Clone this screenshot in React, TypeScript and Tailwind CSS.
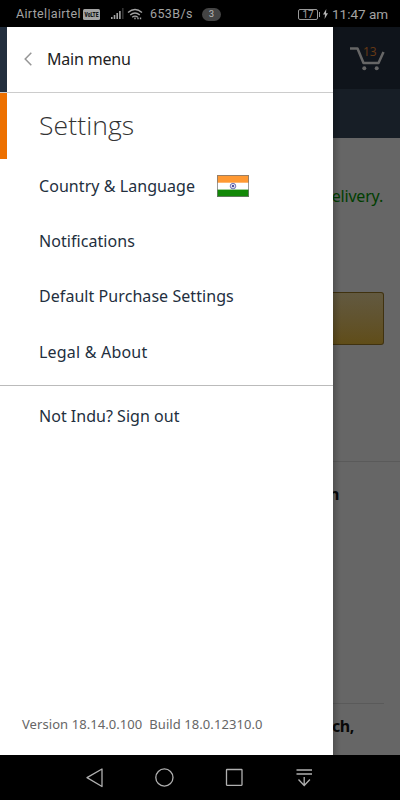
import React from "react";

const ember = "font-['Noto_Sans','Open_Sans',sans-serif]";

function StatusBar() {
  return (
    <header className="flex h-[27px] shrink-0 items-center bg-black pl-4 pr-3 pt-px font-['Roboto',sans-serif] text-[12.5px] leading-none text-[#a3a3a3]">
      <span className="w-[67px] whitespace-nowrap leading-4 tracking-[0.32px]">Airtel|airtel</span>
      <svg className="h-[11px] w-[17px] shrink-0 overflow-visible" viewBox="0 0 17 11">
        <rect width="17" height="11" rx="1.5" fill="#a3a3a3" />
        <text x="1.5" y="8" textLength="14" lengthAdjust="spacingAndGlyphs" fontSize="7" fontWeight="900" fontFamily="Roboto, sans-serif" fill="#111">VoLTE</text>
      </svg>
      <svg className="ml-[11px] h-3 w-[13px] shrink-0" viewBox="0 0 13 12" fill="#a3a3a3">
        <rect x="0" y="9" width="1.6" height="2" />
        <rect x="2.7" y="7" width="1.6" height="4" />
        <rect x="5.4" y="5" width="1.6" height="6" />
        <rect x="8.1" y="3" width="1.6" height="8" />
        <rect x="11" y="0" width="1.6" height="11" fill="#333" />
      </svg>
      <svg className="ml-[3px] h-[13px] w-4 shrink-0" viewBox="0 0 16 13" fill="none" stroke="#a3a3a3" strokeWidth="1.4">
        <path d="M1 4.5Q8-1.5 15 4.5M3.2 7Q8 2.8 12.8 7M5.2 9.3Q8 7 10.8 9.3" />
        <path d="M8 9.5v2.5M11 9.5v2.5M13.5 9.5v2.5" strokeDasharray="1.5 .8" />
      </svg>
      <span className="ml-[7px] w-[43px] whitespace-nowrap leading-4 tracking-[0.4px]">653B/s</span>
      <span className="ml-[9px] flex h-[13px] w-[19px] items-center justify-center rounded-full bg-[#444] text-[9.5px] text-[#bbb]">3</span>
      <span className="ml-auto flex h-[11px] w-[20px] items-center justify-center rounded-[2px] border border-[#999] text-[10px] leading-[9px]">17</span>
      <span className="ml-px h-[5px] w-px bg-[#999]" />
      <svg className="ml-[3px] h-[10px] w-[5px]" viewBox="0 0 5 10" fill="#b5b5b5">
        <path d="M3.3 0 0 5.6h2L1.6 10 5 4.2H3z" />
      </svg>
      <span className="ml-[4px] w-[56px] whitespace-nowrap text-[13.5px] leading-4">11:47 am</span>
    </header>
  );
}

function IndiaFlag() {
  return (
    <svg className="ml-[22px] h-[22px] w-8" viewBox="0 0 32 22">
      <rect width="32" height="22" fill="#fff" />
      <rect width="32" height="7.7" fill="#ff9933" />
      <rect y="14.6" width="32" height="7.4" fill="#128807" />
      <g stroke="#5558a8" fill="none">
        <circle cx="16" cy="11.1" r="2.8" strokeWidth=".8" />
        <path d="M13.2 11.1h5.6M16 8.3v5.6M14 9.1l4 4M18 9.1l-4 4" strokeWidth=".35" />
      </g>
      <circle cx="16" cy="11.1" r="1" fill="#37398e" />
      <rect x=".5" y=".5" width="31" height="21" fill="none" stroke="#777" strokeOpacity=".75" />
    </svg>
  );
}

function Drawer() {
  return (
    <aside className={`flex w-[333px] shrink-0 flex-col bg-white text-[#232f3e] ${ember}`}>
      <div className="flex h-[66px] shrink-0 border-b border-[#ccc] text-[#222]">
        <span className="w-[7px] bg-[#232f3e]" />
        <button className="flex items-center pb-0.5 pl-[17px] text-left">
          <svg className="h-[14px] w-2" viewBox="0 0 8 14" fill="none" stroke="#969696" strokeWidth="1.5">
            <path d="M7.3.7 1.2 7l6.1 6.3" />
          </svg>
          <span className="ml-[15px] text-[16px] tracking-[-0.2px]">Main menu</span>
        </button>
      </div>
      <h1 className="flex h-[66px] shrink-0 items-center border-l-[7px] border-[#ed7000] pl-8 font-['Open_Sans','Noto_Sans',sans-serif] text-[26.5px] font-light tracking-[0.1px] text-[#333]">Settings</h1>
      <nav className="flex h-[227px] shrink-0 flex-col border-b border-[#bbb] pl-[39px] text-[16px] tracking-[0.06px]">
        <a className="flex h-[55px] items-center pb-0.5">Country &amp; Language<IndiaFlag /></a>
        <a className="flex h-[55px] items-center pb-0.5">Notifications</a>
        <a className="flex h-[56px] items-center pb-0.5">Default Purchase Settings</a>
        <a className="flex h-[55px] items-center pb-0.5 tracking-[0.2px]">Legal &amp; About</a>
      </nav>
      <a className="flex h-[62px] shrink-0 items-center pb-0.5 pl-[39px] text-[16px] tracking-[0.02px]">Not Indu? Sign out</a>
      <p className="mt-auto mb-[21px] whitespace-pre pl-[22px] text-[13px] leading-5 tracking-[0.07px] text-[#666]">Version 18.14.0.100  Build 18.0.12310.0</p>
    </aside>
  );
}

function DimmedPage() {
  return (
    <main className={`relative flex min-w-0 flex-1 flex-col overflow-hidden bg-[#666] ${ember}`}>
      <div className="flex h-[62px] shrink-0 items-start bg-[#0f141b] pl-[17px] pt-[18px]">
        <svg className="h-[27px] w-[35px] overflow-visible" viewBox="0 0 35 27" fill="none">
          <path d="M0 3.5h7.5l6 14.5h15L33.5 7" stroke="#666" strokeWidth="2.5" strokeLinejoin="round" />
          <circle cx="14.3" cy="23.3" r="2" fill="#666" />
          <circle cx="26.7" cy="23.3" r="2" fill="#666" />
          <text x="13" y="10.5" fontSize="12" fontFamily="Noto Sans, sans-serif" fill="#653815">13</text>
        </svg>
      </div>
      <div className="h-[49px] shrink-0 bg-[#171e26]" />
      <div className="flex h-[154px] shrink-0 justify-end pr-[17px] pt-[46px] text-[16px] leading-6 tracking-[-0.2px] text-[#003e00]">
        <span className="whitespace-nowrap">elivery.</span>
      </div>
      <div className="mr-4 h-[53px] shrink-0 rounded-r-[3px] border border-l-0 border-[#40320f] bg-linear-to-b from-[#625940] to-[#604d18]" />
      <div className="mt-[116px] shrink-0 border-t border-[#5a5a5a]" />
      <div className="flex h-[241px] shrink-0 items-start pt-5">
        <span className="-ml-[4px] text-[16px] font-bold leading-6 text-[#080808]">n</span>
      </div>
      <div className="mr-4 shrink-0 border-t border-[#5a5a5a]" />
      <span className="-ml-px mt-[10px] text-[16px] font-bold leading-6 tracking-[-0.5px] text-[#080808]">ch,</span>
      <div className="absolute inset-y-0 left-0 w-2 bg-linear-to-r from-black/20 to-transparent" />
    </main>
  );
}

function NavigationBar() {
  return (
    <footer className="flex h-[45px] shrink-0 justify-center bg-black">
      <svg className="h-[45px] w-[400px]" viewBox="0 0 400 45" fill="none" stroke="#b0b0b0" strokeWidth="1.3">
        <path d="M102 14v17.5L87 22.6z" strokeLinejoin="round" />
        <circle cx="164.4" cy="22.5" r="8.6" />
        <rect x="226.5" y="14.5" width="15.5" height="15.8" rx=".5" />
        <path d="M296.5 15h15.5M296.5 19h15.5M304.2 22v8M298.5 24.5l5.7 6 5.7-6" />
      </svg>
    </footer>
  );
}

export default function App() {
  return (
    <div className="flex h-[800px] w-[400px] flex-col overflow-hidden bg-black">
      <StatusBar />
      <div className="flex min-h-0 flex-1">
        <Drawer />
        <DimmedPage />
      </div>
      <NavigationBar />
    </div>
  );
}
